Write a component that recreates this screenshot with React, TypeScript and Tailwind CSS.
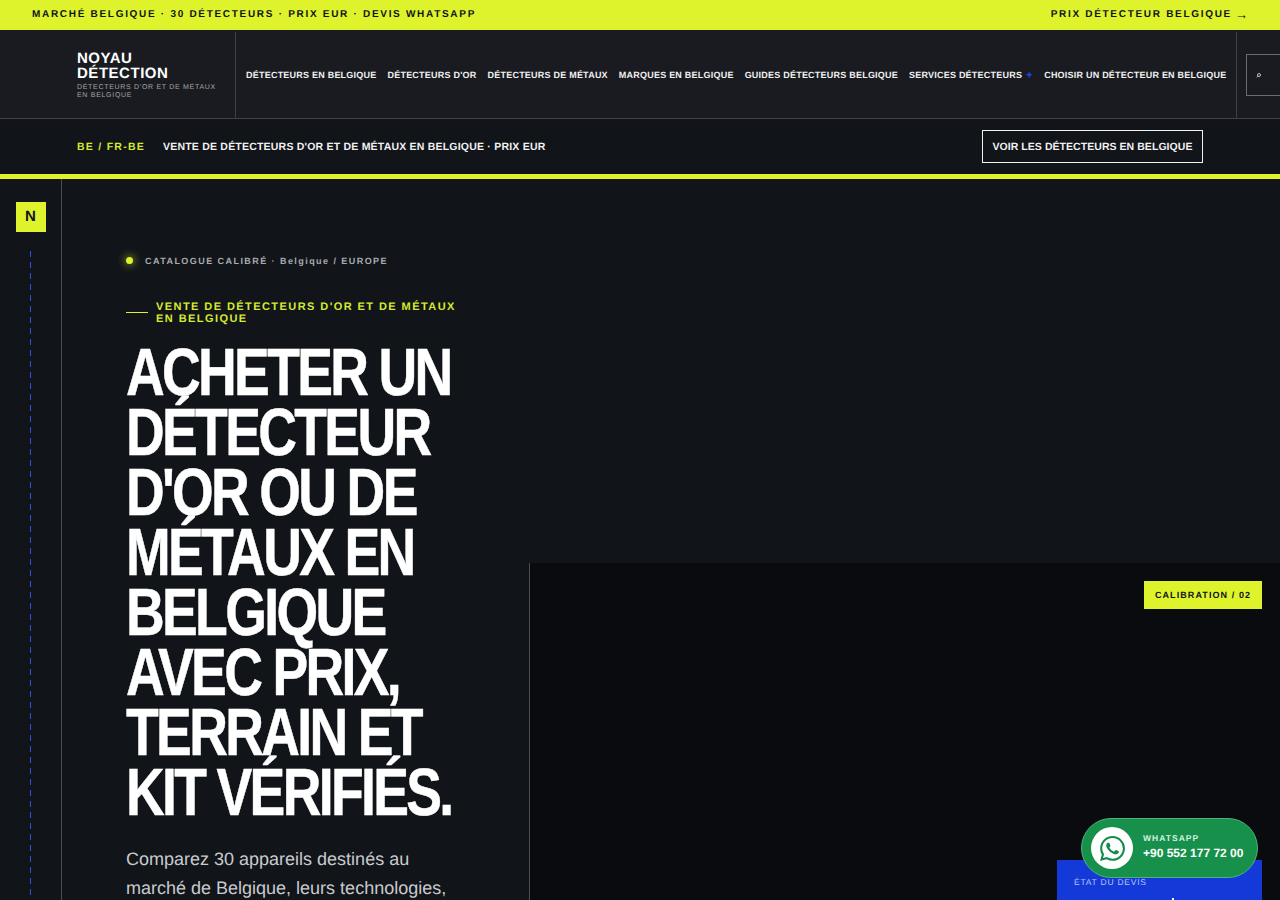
import React from "react";

const FONT = "font-['Liberation_Sans',Arial,sans-serif] [text-rendering:geometricPrecision]";
const NAV = [
  "DÉTECTEURS EN BELGIQUE",
  "DÉTECTEURS D'OR",
  "DÉTECTEURS DE MÉTAUX",
  "MARQUES EN BELGIQUE",
  "GUIDES DÉTECTEURS BELGIQUE",
];

function WhatsAppIcon() {
  return (
    <svg viewBox="0 0 24 24" className="w-[25px] h-[25px]" fill="#128c4a">
      <path d="M17.472 14.382c-.297-.149-1.758-.867-2.03-.967-.273-.099-.471-.148-.67.15-.197.297-.767.966-.94 1.164-.173.199-.347.223-.644.075-.297-.15-1.255-.463-2.39-1.475-.883-.788-1.48-1.761-1.653-2.059-.173-.297-.018-.458.13-.606.134-.133.298-.347.446-.52.149-.174.198-.298.298-.497.099-.198.05-.371-.025-.52-.075-.149-.669-1.612-.916-2.207-.242-.579-.487-.5-.669-.51-.173-.008-.371-.01-.57-.01-.198 0-.52.074-.792.372-.272.297-1.04 1.016-1.04 2.479 0 1.462 1.065 2.875 1.213 3.074.149.198 2.096 3.2 5.077 4.487.709.306 1.262.489 1.694.625.712.227 1.36.195 1.871.118.571-.085 1.758-.719 2.006-1.413.248-.694.248-1.289.173-1.413-.074-.124-.272-.198-.57-.347m-5.421 7.403h-.004a9.87 9.87 0 01-5.031-1.378l-.361-.214-3.741.982.998-3.648-.235-.374a9.86 9.86 0 01-1.51-5.26c.001-5.45 4.436-9.884 9.888-9.884 2.64 0 5.122 1.03 6.988 2.898a9.825 9.825 0 012.893 6.994c-.003 5.45-4.437 9.884-9.885 9.884m8.413-18.297A11.815 11.815 0 0012.05 0C5.495 0 .16 5.335.157 11.892c0 2.096.547 4.142 1.588 5.945L.057 24l6.305-1.654a11.882 11.882 0 005.683 1.448h.005c6.554 0 11.89-5.335 11.893-11.893a11.821 11.821 0 00-3.48-8.413z" />
    </svg>
  );
}

export default function App() {
  return (
    <div className={`${FONT} relative h-[900px] w-[1280px] overflow-hidden bg-[#111419] text-white`}>
      {/* promo bar */}
      <div className="flex h-[30px] items-center justify-between bg-[#def32c] pb-[2px] pl-8 pr-[32px] text-[10px] font-bold tracking-[0.17em] text-[#11141a]">
        <span>MARCHÉ BELGIQUE · 30 DÉTECTEURS · PRIX EUR · DEVIS WHATSAPP</span>
        <span className="flex items-center">
          PRIX DÉTECTEUR BELGIQUE
          <span className="ml-[3px] text-[13px] font-normal leading-none tracking-normal">→</span>
        </span>
      </div>

      {/* main header */}
      <header className="flex h-[89px] border-b border-[#3d4047] bg-[#191b20] pt-[2px]">
        <div className="flex w-[236px] shrink-0 flex-col justify-center border-r border-[#3d4047] pl-[77px] pr-[10px]">
          <div className="text-[15px] font-bold leading-[15px] tracking-[0.035em]">
            NOYAU
            <br />
            DÉTECTION
          </div>
          <div className="mt-[3px] w-[142px] text-[7px] leading-[8px] tracking-[0.1em] text-[#a3a5a9]">
            DÉTECTEURS D'OR ET DE MÉTAUX EN BELGIQUE
          </div>
        </div>
        <nav className="flex w-[1000px] shrink-0 items-center gap-[11px] whitespace-nowrap pl-[10px] pt-px text-[9px] font-bold tracking-[0.025em] text-[#f1f1f1]">
          {NAV.map((n) => (
            <span key={n}>{n}</span>
          ))}
          <span className="flex items-center">
            SERVICES DÉTECTEURS
            <span className="flex w-[11px] justify-end text-[9px] leading-none text-[#1f3fd6]">✦</span>
          </span>
          <span>CHOISIR UN DÉTECTEUR EN BELGIQUE</span>
        </nav>
        <div className="flex flex-1 items-center border-l border-[#3d4047] pl-[9px]">
          <div className="flex h-[42px] w-[60px] shrink-0 items-center border border-[#6a6c71] pl-[9px]">
            <svg viewBox="0 0 8 8" className="h-[5px] w-[5px]" fill="none" stroke="#f1f1f1" strokeWidth="1.2">
              <circle cx="4.8" cy="3.2" r="2.4" />
              <path d="M3 5 1 7" />
            </svg>
          </div>
        </div>
      </header>

      {/* secondary strip */}
      <div className="flex h-[60px] items-center justify-between border-b-[5px] border-[#def32c] bg-[#111419] pl-[77px] pr-[77px]">
        <div className="flex items-center pt-[2px] text-[10.5px] font-bold">
          <span className="tracking-[0.12em] text-[#d5e92f]">BE / FR-BE</span>
          <span className="ml-[18px] tracking-[0.02em] text-[#f1f1f1]">
            VENTE DE DÉTECTEURS D'OR ET DE MÉTAUX EN BELGIQUE · PRIX EUR
          </span>
        </div>
        <div className="flex h-[33px] w-[221px] items-center justify-center border border-[#f1f1f1] pt-[2px] text-[10.5px] font-bold tracking-[0.005em] text-[#f1f1f1]">
          VOIR LES DÉTECTEURS EN BELGIQUE
        </div>
      </div>

      {/* hero */}
      <main className="flex">
        <aside className="flex h-[722px] w-[62px] shrink-0 flex-col items-center border-r border-[#4a4d53] pt-[23px]">
          <div className="flex h-[30px] w-[30px] items-center justify-center bg-[#def32c] text-[15px] font-bold text-[#11141a]">
            N
          </div>
          <div className="mt-[19px] h-[645px] w-px bg-[repeating-linear-gradient(to_bottom,#2f50e8_0,#2f50e8_6px,transparent_6px,transparent_11px)]" />
        </aside>

        <section className="w-[467px] shrink-0 pl-[64px] pr-[60px] pt-[76px]">
          <div className="flex items-center text-[9px] font-bold tracking-[0.16em] text-[#a9abb0]">
            <span className="mr-[12px] h-[7px] w-[7px] -translate-y-px rounded-full bg-[#def32c] shadow-[0_0_10px_#def32c]" />
            CATALOGUE CALIBRÉ · Belgique / EUROPE
          </div>
          <div className="mt-[32px] flex items-center">
            <span className="mr-2 h-px w-[22px] shrink-0 bg-[#def32c]" />
            <span className="text-[11px] font-bold leading-[12px] tracking-[0.13em] text-[#d5e92f]">
              VENTE DE DÉTECTEURS D'OR ET DE MÉTAUX EN BELGIQUE
            </span>
          </div>
          <h1 className="mt-[18px] w-[412px] origin-left scale-x-[0.8] text-[67px] font-bold leading-[60px] tracking-[-0.05em] text-white [-webkit-text-stroke:0.5px_white]">
            ACHETER UN DÉTECTEUR D'OR OU DE MÉTAUX EN BELGIQUE AVEC PRIX, TERRAIN ET KIT VÉRIFIÉS.
          </h1>
          <p className="mt-[22px] w-[330px] text-[18px] leading-[29px] text-[#c8cacd]">
            Comparez 30 appareils destinés au marché de Belgique, leurs technologies, leurs prix et leurs kits.
          </p>
        </section>

        <section className="flex-1">
          <div className="h-[384px]" />
          <div className="h-[338px] border-l border-[#4a4d53] bg-[#090b0f]">
            <div className="flex justify-end pr-[18px] pt-[18px]">
              <div className="flex h-[28px] w-[118px] items-center justify-center bg-[#def32c] pt-px text-[9px] font-bold tracking-[0.12em] text-[#11141a]">
                CALIBRATION / 02
              </div>
            </div>
          </div>
        </section>
      </main>

      {/* status card */}
      <div className="absolute left-[1057px] top-[860px] h-[60px] w-[205px] bg-[#1339d8] pl-[17px] pt-[16px] text-[8.5px] tracking-[0.09em] text-[#b9c6f5]">
        ÉTAT DU DEVIS
        <span className="absolute left-[115px] top-[38px] h-[2px] w-[2px] bg-white" />
      </div>

      {/* WhatsApp */}
      <div className="absolute left-[1081px] top-[818px] flex h-[60px] w-[177px] items-center rounded-full border border-[#4fb27a] bg-[#16904b] pb-[3px] pl-[9px]">
        <div className="mt-[3px] flex h-[42px] w-[42px] items-center justify-center rounded-full bg-white">
          <WhatsAppIcon />
        </div>
        <div className="ml-[10px]">
          <div className="text-[8.5px] font-bold leading-[11px] tracking-[0.12em] text-[#d6f2e0]">WHATSAPP</div>
          <div className="mt-[2px] text-[12px] font-bold leading-[14px] text-white">+90 552 177 72 00</div>
        </div>
      </div>
    </div>
  );
}
